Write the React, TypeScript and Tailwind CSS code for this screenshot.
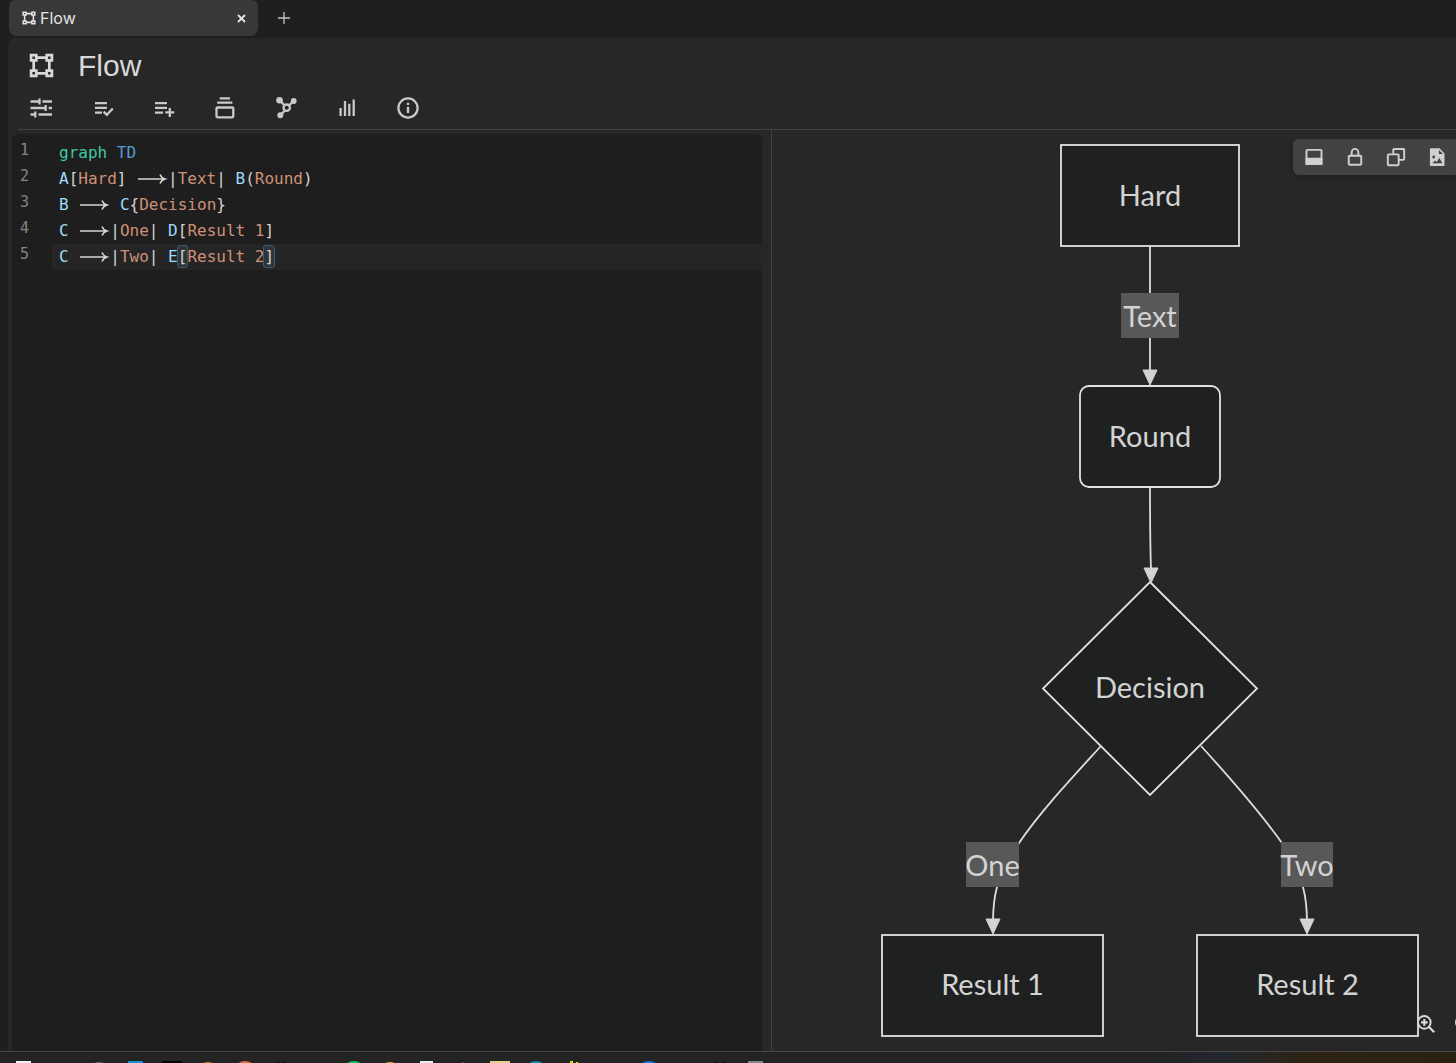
import type { ReactNode } from 'react';
import clsx from 'clsx';

type IconProps = { size?: number; weight?: number; children: ReactNode };

const Icon = ({ size = 24, weight = 2.3, children }: IconProps) => (
  <svg width={size} height={size} viewBox="0 0 24 24" fill="none" stroke="currentColor" strokeWidth={weight} aria-hidden="true">
    {children}
  </svg>
);

const FlowIcon = ({ size = 24 }: { size?: number }) => (
  <Icon size={size} weight={2.6}>
    <path d="M2 2h5v5H2zM17 2h5v5h-5zM2 17h5v5H2zM17 17h5v5h-5zM7 4.5h10M7 19.5h10M4.5 7v10M19.5 7v10" />
  </Icon>
);

const tools = [
  {
    label: 'Properties',
    icon: <path d="M.5 5.5h9M9.5 2.5v6M12.5 5.5H22M.5 12h15M15.7 9v6M18.7 12H22M.5 18.5h5M5.3 15.5v6M8.5 18.5H22" />,
  },
  {
    label: 'Check list',
    icon: <path d="M4 7.2h12M4 11.8h12M4 16.6h7M12.6 15.6l3.2 3.2 6-6.3" />,
  },
  {
    label: 'Add to list',
    icon: <path d="M3 7.2h12M3 11.8h12M3 16.6h8M13.3 16.4h9M17.8 12v9" />,
  },
  {
    label: 'Stack',
    icon: (
      <>
        <path d="M6.7 2.3H17M4.2 6.7h15.2" />
        <rect x="3.5" y="11.5" width="16.8" height="9.8" rx="1" />
      </>
    ),
  },
  {
    label: 'Graph',
    icon: (
      <>
        <path d="M6 4.5l4.5 5M19 5.5l-4 4M7 18.5l4-4" />
        <circle cx="12.7" cy="11.7" r="3.2" />
        <g fill="currentColor" stroke="none">
          <circle cx="5.5" cy="4.3" r="3.3" />
          <circle cx="19.7" cy="5" r="2.9" />
          <circle cx="6.3" cy="19.3" r="3" />
        </g>
      </>
    ),
  },
  {
    label: 'Statistics',
    icon: <path d="M5.6 12v8M10 5v15M14.3 7.8V20M18.7 3.5V20" />,
  },
  {
    label: 'Info',
    icon: (
      <>
        <circle cx="12" cy="12" r="9.6" />
        <path d="M12 10.8V17M12 6.8v2.2" />
      </>
    ),
  },
];

const Arrow = () => (
  <svg className="inline-block align-middle" width="32" height="14" viewBox="0 0 32 14" fill="none" stroke="#d4d4d4" strokeWidth="1.5" aria-label="-->">
    <path d="M2 6h27M24 1.5c1 2.4 2.6 3.8 5 4.5c-2.4.7-4 2.1-5 4.5" />
  </svg>
);

const Id = ({ children }: { children: ReactNode }) => <span className="text-[#9cdcfe]">{children}</span>;
const Str = ({ children }: { children: ReactNode }) => <span className="text-[#ce9178]">{children}</span>;
const Match = ({ children }: { children: ReactNode }) => (
  <span className="rounded-xs bg-[#2f3437] py-px outline outline-1 outline-[#3b5a75]">{children}</span>
);

const lines: ReactNode[] = [
  <><span className="text-[#3dc9a3]">graph</span> <span className="text-[#569cd6]">TD</span></>,
  <><Id>A</Id>[<Str>Hard</Str>] <Arrow />|<Str>Text</Str>| <Id>B</Id>(<Str>Round</Str>)</>,
  <><Id>B</Id> <Arrow /> <Id>C</Id>{'{'}<Str>Decision</Str>{'}'}</>,
  <><Id>C</Id> <Arrow />|<Str>One</Str>| <Id>D</Id>[<Str>Result 1</Str>]</>,
  <><Id>C</Id> <Arrow />|<Str>Two</Str>| <Id>E</Id><Match>[</Match><Str>Result 2</Str><Match>]</Match></>,
];

const Editor = () => (
  <div className="flex-1 min-w-0 rounded-t-md bg-[#1e1e1e] pt-1.5 font-['DejaVu_Sans_Mono',monospace] text-base leading-[26px] text-[#d4d4d4]">
    {lines.map((line, i) => (
      <div key={i} className="flex">
        <span className="w-10 shrink-0 pl-2 text-[15px] leading-5 text-[#858585]">{i + 1}</span>
        <code className={clsx('flex-1 h-[26px] whitespace-pre pl-[7px] font-[inherit]', i === 4 && 'bg-[#252525]')}>{line}</code>
      </div>
    ))}
  </div>
);

const Head = ({ x, y }: { x: number; y: number }) => (
  <path d={`M${x - 7} ${y - 15}h14l-7 15z`} fill="#d3d3d3" stroke="#d3d3d3" strokeWidth="1" />
);

const nodes = [
  { x: 1061, y: 145, w: 178, h: 101, r: 0, label: 'Hard', base: 206 },
  { x: 1080, y: 386, w: 140, h: 101, r: 9, label: 'Round', base: 447 },
  { x: 882, y: 935, w: 221, h: 101, r: 0, label: 'Result 1', base: 995 },
  { x: 1197, y: 935, w: 221, h: 101, r: 0, label: 'Result 2', base: 995 },
];

const edgeLabels = [
  { x: 1121, y: 293, w: 58, label: 'Text' },
  { x: 966, y: 842, w: 53, label: 'One' },
  { x: 1281, y: 842, w: 52, label: 'Two' },
];

const Diagram = () => (
  <svg className="shrink-0 font-['Lato',sans-serif] text-[29px]" width="540" height="896" viewBox="880 143 540 896" role="img" aria-label="Flow chart">
    <g fill="none" stroke="#dedede" strokeWidth="1.8">
      <path d="M1150 246V372M1150 487Q1150 540 1151 570" />
      <path d="M1101 746C1070 780 1040 812 1019 843L997 887Q993 902 993 922" />
      <path d="M1201 746C1232 780 1262 815 1282 843L1303 887Q1307 902 1307 922" />
    </g>
    <g fill="#1f2020" stroke="#e2e2e2" strokeWidth="1.8">
      {nodes.map((n) => (
        <rect key={n.label} x={n.x} y={n.y} width={n.w} height={n.h} rx={n.r} />
      ))}
      <path d="M1150 582L1257 688.5L1150 795L1043 688.5z" />
    </g>
    <Head x={1150} y={385} />
    <Head x={1151} y={583} />
    <Head x={993} y={934} />
    <Head x={1307} y={934} />
    <g fill="#d3d3d3" textAnchor="middle">
      {nodes.map((n) => (
        <text key={n.label} x={n.x + n.w / 2} y={n.base}>{n.label}</text>
      ))}
      <text x="1150" y="698">Decision</text>
      {edgeLabels.map((e) => (
        <g key={e.label}>
          <rect x={e.x} y={e.y} width={e.w} height="45" fill="#585858" />
          <text x={e.x + e.w / 2} y={e.y + 34}>{e.label}</text>
        </g>
      ))}
    </g>
  </svg>
);

const previewTools = [
  {
    label: 'Toggle panel',
    icon: (
      <>
        <rect x="3" y="3.4" width="18" height="17" rx="1" />
        <path d="M3 14h18v6.4H3z" fill="currentColor" />
      </>
    ),
  },
  {
    label: 'Lock',
    icon: (
      <>
        <rect x="4.5" y="10.5" width="15" height="10.7" rx="1" />
        <path d="M8 10.5V6.2a4 4 0 0 1 8 0v4.3" />
      </>
    ),
  },
  {
    label: 'Copy',
    icon: (
      <>
        <rect x="2.2" y="8.8" width="13" height="13" rx="1" />
        <path d="M8.8 8.8V3.4a1 1 0 0 1 1-1h11a1 1 0 0 1 1 1v11a1 1 0 0 1-1 1h-5.6" />
      </>
    ),
  },
  {
    label: 'Export image',
    icon: (
      <>
        <path d="M5.3 1.5H15l6 6.2v13.8a1.2 1.2 0 0 1-1.2 1.2H4.7a1.2 1.2 0 0 1-1.2-1.2V2.7a1.2 1.2 0 0 1 1.2-1.2z" fill="currentColor" stroke="none" />
        <path d="M14.3 3.5v4.8h4.8zM6.5 19.5l3-3.2 2.1 1.6 3.2-4.6 3.7 6.2z" fill="#424242" stroke="none" />
        <circle cx="8" cy="12" r="1.7" fill="#424242" stroke="none" />
      </>
    ),
  },
];

const Preview = () => (
  <div className="relative flex flex-1 min-w-0 justify-center overflow-hidden border-l border-[#424242] pl-[72px] pt-[13px]">
    <Diagram />
    <div className="absolute right-0 top-[9px] flex h-9 items-center gap-[21px] rounded-l-md bg-[#424242] pl-[11px] pr-[9px] text-[#d0d0d0] shadow-md">
      {previewTools.map((t) => (
        <button key={t.label} aria-label={t.label}>
          <Icon size={20}>{t.icon}</Icon>
        </button>
      ))}
    </div>
    <div className="absolute -right-[18px] bottom-[17px] flex gap-[18px] text-[#dadada]">
      <button aria-label="Zoom in">
        <Icon size={20}>
          <circle cx="10" cy="10" r="7.6" />
          <path d="M15.4 15.4l6.4 6.4M10 6v8M6 10h8" strokeWidth="2.6" />
        </Icon>
      </button>
      <button aria-label="Zoom out">
        <Icon size={20}>
          <circle cx="10" cy="10" r="7.6" />
          <path d="M15.4 15.4l6.4 6.4M6 10h8" strokeWidth="2.6" />
        </Icon>
      </button>
    </div>
  </div>
);

/* Only the tops of the dock icons stick out above the window edge */
const dock: ReactNode[] = [
  <rect x="2" y="0" width="15" height="12" fill="#f2f2f2" />,
  null,
  <circle cx="12" cy="12" r="11" fill="#707070" />,
  <rect x="5" y="0" width="15" height="12" rx="1" fill="#1593d2" />,
  <rect x="2" y="0" width="20" height="12" fill="#000000" />,
  <circle cx="12" cy="12" r="11" fill="#d07c10" />,
  <circle cx="12" cy="12" r="12" fill="#f0643c" />,
  <path d="M8 1h2v2H8zM14 1h2v2h-2z" fill="#050505" />,
  null,
  <circle cx="12" cy="12" r="12" fill="#16c060" />,
  <circle cx="12" cy="12" r="11" fill="#f5a81c" />,
  <rect x="5" y="0" width="13" height="12" fill="#e8eef6" />,
  <path d="M12 1l3 2H8z" fill="#b83c50" />,
  <path d="M2 0h20v12H2z" fill="#e0cf8e" />,
  <circle cx="12" cy="12" r="12" fill="#1389b4" />,
  <path d="M9 0h3v3H9zM15 1h2v2h-2z" fill="#e8d800" />,
  null,
  <circle cx="16" cy="12" r="12" fill="#1879dc" />,
  null,
  <path d="M8 1h2v2H8zM16 1h2v2h-2z" fill="#050505" />,
  <rect x="5" y="0" width="15" height="12" fill="#7d868c" />,
];

const Dock = () => (
  <footer className="flex h-3 shrink-0 overflow-hidden border-t border-[#454545] bg-[linear-gradient(to_right,#232323_79%,#22272e_84%,#2e2314_90%,#2b2113)]">
    <div className="grid w-[765px] grid-cols-[repeat(21,minmax(0,1fr))] justify-items-center ml-2 pt-[9px]">
      {dock.map((shape, i) => (
        <svg key={i} width="24" height="3" viewBox="0 0 24 3" aria-hidden="true">{shape}</svg>
      ))}
    </div>
  </footer>
);

const App = () => (
  <div className="flex h-screen flex-col overflow-hidden bg-[#1f1f1f] font-['Inter',sans-serif] text-[#d8d8d8]">
    <nav className="flex h-[38px] shrink-0 items-start pl-[9px]">
      <div className="flex h-9 w-[249px] items-center rounded-b-lg rounded-t-md bg-[#383838] pl-[13px] pr-3 text-[#e4e4e4]">
        <FlowIcon size={14} />
        <span className="ml-1 flex-1 text-base">Flow</span>
        <button aria-label="Close tab">
          <svg width="9" height="9" viewBox="0 0 9 9" stroke="currentColor" strokeWidth="1.8">
            <path d="M1 1l7 7M8 1L1 8" />
          </svg>
        </button>
      </div>
      <button aria-label="New tab" className="ml-5 flex h-9 items-center text-[#c4c4c4]">
        <svg width="12" height="12" viewBox="0 0 12 12" stroke="currentColor" strokeWidth="1.3">
          <path d="M6 0v12M0 6h12" />
        </svg>
      </button>
    </nav>

    <main className="ml-2 flex min-h-0 flex-1 flex-col rounded-tl-lg bg-[#272727]">
      <header className="shrink-0 pl-[10px]">
        <div className="flex h-[55px] items-center gap-6 pl-[11px]">
          <FlowIcon size={25} />
          <h1 className="font-['Liberation_Sans',sans-serif] text-[30px] leading-9">Flow</h1>
        </div>
        <div className="flex h-9 items-start gap-[37px] pl-3 pt-[3px] text-[#c9c9c9]">
          {tools.map((t) => (
            <button key={t.label} aria-label={t.label}>
              <Icon>{t.icon}</Icon>
            </button>
          ))}
        </div>
        <div className="border-t border-[#424242]" />
      </header>
      <div className="flex min-h-0 flex-1">
        <section className="flex w-[763px] shrink-0 pl-1 pr-[9px] pt-1">
          <Editor />
        </section>
        <Preview />
      </div>
    </main>

    <Dock />
  </div>
);

export default App;
